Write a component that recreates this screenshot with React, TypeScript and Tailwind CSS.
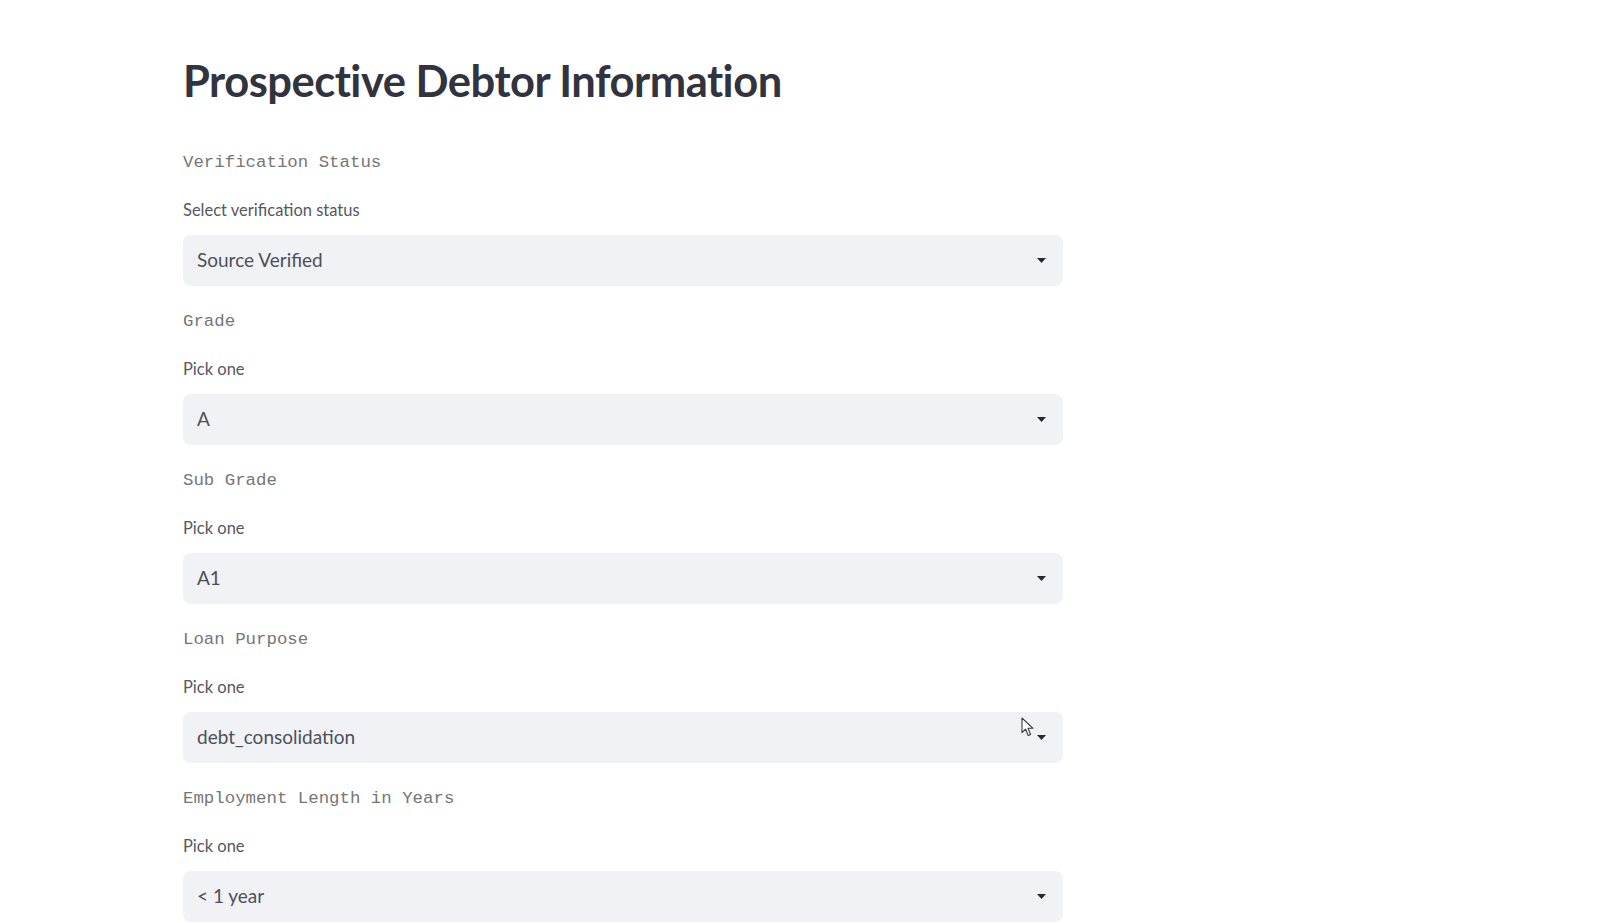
const sections = [
  { title: "Verification Status", label: "Select verification status", value: "Source Verified" },
  { title: "Grade", label: "Pick one", value: "A" },
  { title: "Sub Grade", label: "Pick one", value: "A1" },
  { title: "Loan Purpose", label: "Pick one", value: "debt_consolidation", cursor: true },
  { title: "Employment Length in Years", label: "Pick one", value: "< 1 year" },
];

function Caret() {
  return (
    <svg width="9" height="5" viewBox="0 0 9 5" className="shrink-0">
      <path d="M0 0 L9 0 L4.5 5 Z" fill="#262730" />
    </svg>
  );
}

// mouse pointer captured in the screenshot
function Cursor() {
  return (
    <svg
      width="14"
      height="20"
      viewBox="0 0 14 20"
      className="absolute left-[838px] top-[5px] pointer-events-none"
    >
      <path
        d="M1 1 L1 15.5 L4.6 12.2 L7.2 18.5 L9.6 17.5 L7 11.3 L12 11.3 Z"
        fill="#ffffff"
        stroke="#3a3a3a"
        strokeWidth="1.1"
        strokeLinejoin="round"
      />
    </svg>
  );
}

function SelectBox({ value, cursor }: { value: string; cursor?: boolean }) {
  return (
    <div className="relative mt-[13px] h-[51px] w-[880px] rounded-[8px] bg-[#f0f2f6] pl-[14px] pr-[17px] flex items-center justify-between">
      <span className="text-[19px] text-[#4e4f58]">{value}</span>
      <Caret />
      {cursor && <Cursor />}
    </div>
  );
}

export default function App() {
  return (
    <div className="min-h-screen bg-white font-['Lato',sans-serif]">
      <div className="ml-[183px] pt-[52px] w-[880px]">
        <h1 className="text-[43.5px] leading-[56px] font-bold text-[#31333f] tracking-[-0.5px]">
          Prospective Debtor Information
        </h1>
        <div className="mt-[41px] flex flex-col gap-[22px]">
          {sections.map((s) => (
            <div key={s.title} className="flex flex-col">
              <div className="mt-[2px] h-[24px] leading-[24px] text-[17.4px] text-[#767676] font-['Liberation_Mono',monospace]">
                {s.title}
              </div>
              <div className="mt-[23px] h-[24px] leading-[24px] text-[16.5px] text-[#56575f]">
                {s.label}
              </div>
              <SelectBox value={s.value} cursor={s.cursor} />
            </div>
          ))}
        </div>
      </div>
    </div>
  );
}
